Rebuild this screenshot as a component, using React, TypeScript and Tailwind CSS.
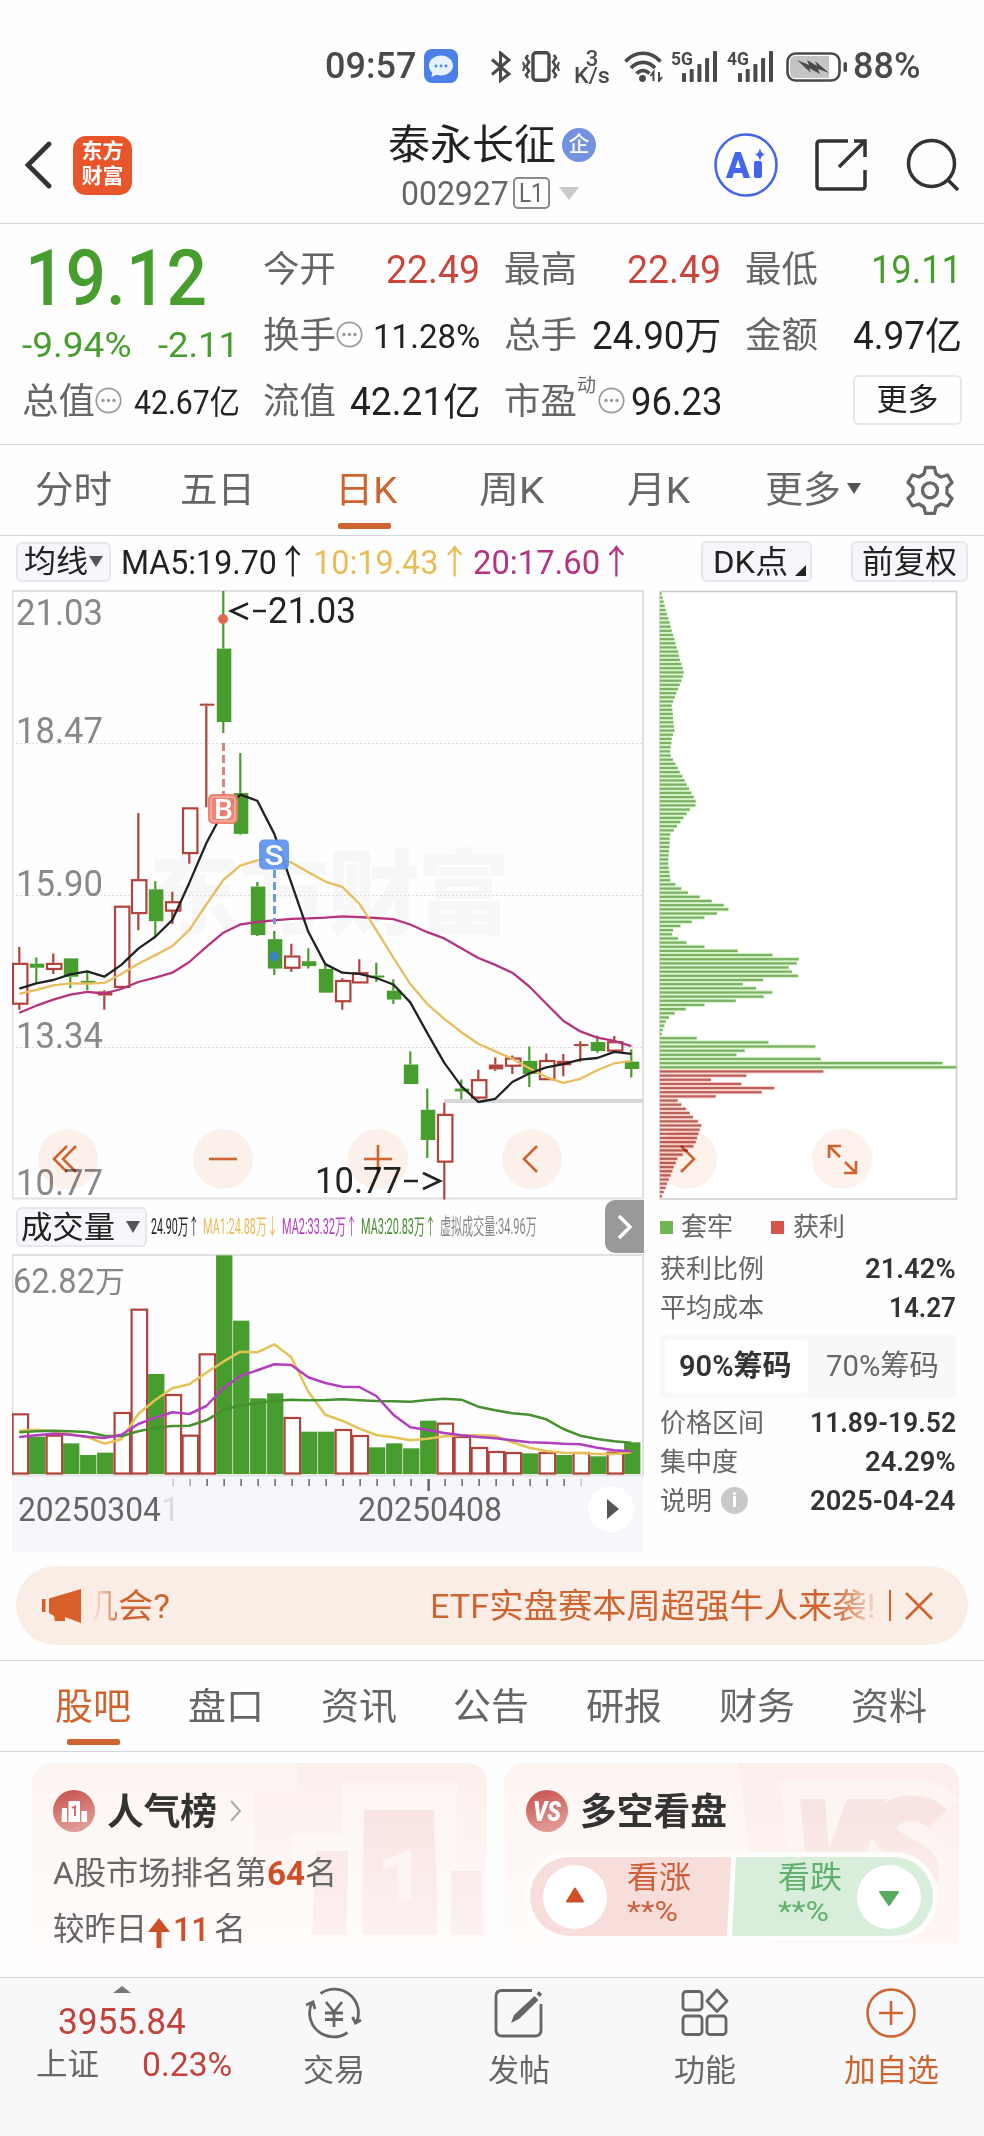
import { useLayoutEffect, useRef, useState, type ReactNode } from "react";

/* Scales one line of text horizontally so that it fills its box. */
function Fit({ className = "", children }: { className?: string; children: ReactNode }) {
  const outer = useRef<HTMLSpanElement>(null);
  const inner = useRef<HTMLSpanElement>(null);
  const [scale, setScale] = useState(1);
  useLayoutEffect(() => {
    if (outer.current && inner.current && inner.current.offsetWidth > 0) {
      setScale(outer.current.clientWidth / inner.current.offsetWidth);
    }
  }, []);
  return (
    <span ref={outer} className={`flex shrink-0 items-center whitespace-nowrap leading-none ${className}`}>
      <span ref={inner} className="inline-block shrink-0 origin-left" style={{ transform: `scaleX(${scale})` }}>
        {children}
      </span>
    </span>
  );
}

const GREEN = "#479d2d";
const RED = "#b1423c";

function Dots() {
  return (
    <svg className="shrink-0" width="27" height="27" viewBox="0 0 27 27">
      <circle cx="13.5" cy="13.5" r="12.2" fill="none" stroke="#999" strokeWidth="1.7" />
      <circle cx="8" cy="13.5" r="1.7" fill="#999" />
      <circle cx="13.5" cy="13.5" r="1.7" fill="#999" />
      <circle cx="19" cy="13.5" r="1.7" fill="#999" />
    </svg>
  );
}

function Signal() {
  return (
    <svg width="36" height="31" viewBox="0 0 36 31" fill="#4a4a4a">
      <rect x="0" y="22" width="4" height="9" rx="1" />
      <rect x="7.7" y="18" width="4" height="13" rx="1" />
      <rect x="15.4" y="13" width="4" height="18" rx="1" />
      <rect x="23.1" y="7" width="4" height="24" rx="1" />
      <rect x="31" y="0" width="4" height="31" rx="1" />
    </svg>
  );
}

function StatusBar() {
  return (
    <div className="flex h-[103px] items-start pl-[325px] pt-[48px] text-[#4a4a4a]">
      <Fit className="h-[36px] w-[91px] text-[36px] font-medium">09:57</Fit>
      <svg className="ml-[8px] mt-px" width="34" height="34" viewBox="0 0 34 34">
        <rect width="34" height="34" rx="8" fill="#4a80e8" />
        <path d="M17 6.5c6.6 0 12 4.400 12 10s-5.400 10-12 10c-1.600 0-3-.2-4.400-.7L7.500 28l.8-4.300C6.300 21.900 5 19.400 5 16.500c0-5.600 5.400-10 12-10z" fill="#e8f2ff" />
        <g fill="#4a80e8"><circle cx="12" cy="17" r="1.400" /><circle cx="17" cy="17" r="1.400" /><circle cx="22" cy="17" r="1.400" /></g>
      </svg>
      <svg className="ml-[32px] mt-[3px]" width="22" height="32" viewBox="0 0 22 32" fill="none" stroke="#4a4a4a" strokeWidth="3">
        <path d="M2 8.500 19 23l-8.500 6.500V2L19 9 2 23.500" />
      </svg>
      <svg className="ml-[10px] mt-[3px]" width="38" height="31" viewBox="0 0 38 31" fill="none" stroke="#4a4a4a">
        <rect x="11" y="1.800" width="16" height="27.400" rx="3" strokeWidth="3.400" />
        <path d="M6 4 4 7l3 4-3 4.500L7 20l-3 4 2 3M32 4l2 3-3 4 3 4.500L31 20l3 4-2 3" strokeWidth="2.600" />
        <path d="M1 11l1.500 4.500L1 20M37 11l-1.500 4.500L37 20" strokeWidth="2" />
      </svg>
      <div className="ml-[14px] mt-[2px] flex w-[36px] flex-col items-center font-medium">
        <span className="text-[22px] leading-[17px]">3</span>
        <Fit className="h-[17px] w-[36px] text-[22px]">K/s</Fit>
      </div>
      <svg className="ml-[14px] mt-[3px]" width="40" height="31" viewBox="0 0 40 31" fill="none" stroke="#4a4a4a" strokeWidth="3.700">
        <path d="M1.500 10.500c9.600-11 25.400-11 35 0M7 17c6.800-7.600 17.200-7.600 24 0M12.500 22.500c4-4 9-4 13 0" />
        <circle cx="18.500" cy="27.500" r="3.400" fill="#4a4a4a" stroke="none" />
        <path d="M29.500 30v-9l-3 4M35 21v9l3-4" strokeWidth="2" />
      </svg>
      <div className="ml-[7px] mt-[3px] flex w-[47px] items-start">
        <Fit className="h-[14px] w-[22px] text-[19px] font-bold">5G</Fit>
        <div className="-ml-[11px]"><Signal /></div>
      </div>
      <div className="ml-[9px] mt-[3px] flex w-[47px] items-start">
        <Fit className="h-[14px] w-[22px] text-[19px] font-bold">4G</Fit>
        <div className="-ml-[11px]"><Signal /></div>
      </div>
      <svg className="ml-[12px] mt-[4px]" width="62" height="30" viewBox="0 0 62 30">
        <rect x="1.500" y="1.500" width="52" height="27" rx="8" fill="#fff" stroke="#4a4a4a" strokeWidth="2.600" />
        <path d="M9 4h34v22H9a5 5 0 0 1-5-5V9a5 5 0 0 1 5-5z" fill="#c4c4c4" />
        <path d="m11 8 12 5-2-5 10 6-2-5 14 12-11-4 2 5-11-6 2 5z" fill="#4a4a4a" />
        <rect x="57.500" y="10" width="3.500" height="10" rx="1.700" fill="#4a4a4a" />
      </svg>
      <Fit className="ml-[5px] h-[36px] w-[67px] text-[36px] font-medium">88%</Fit>
    </div>
  );
}

function Header() {
  return (
    <div className="flex h-[121px] items-center border-b border-[#d4d4d6] pl-[24px] pt-[4px]">
      <svg width="28" height="48" viewBox="0 0 28 48" fill="none" stroke="#333" strokeWidth="4.800" strokeLinecap="round">
        <path d="M25 3 4 24l21 21" />
      </svg>
      <div className="ml-[21px] flex h-[59px] w-[59px] flex-col items-center justify-center rounded-[13px] bg-[#e8552b] pb-[2px] text-[21px] font-bold leading-[25px] text-white">
        <span>东方</span>
        <span>财富</span>
      </div>
      <div className="ml-[256px] flex w-[220px] flex-col pt-[3px]">
        <div className="flex items-center">
          <Fit className="h-[46px] w-[168px] text-[41px] text-[#222]">泰永长征</Fit>
          <span className="ml-[6px] flex h-[34px] w-[34px] items-center justify-center rounded-full bg-[#7393e0] pb-px text-[21px] font-medium leading-none text-white">企</span>
        </div>
        <div className="mt-[7px] flex items-center pl-[13px] text-[#666]">
          <Fit className="h-[36px] w-[108px] text-[34px]">002927</Fit>
          <span className="ml-[4px] flex h-[32px] w-[37px] items-center justify-center rounded-[5px] border-2 border-[#8a8a8a]">
            <Fit className="w-[25px] text-[26px]">L1</Fit>
          </span>
          <span className="ml-[9px] h-0 w-0 border-x-[10px] border-t-[13px] border-x-transparent border-t-[#c9c9c9]" />
        </div>
      </div>
      <svg className="ml-[106px]" width="64" height="64" viewBox="0 0 64 64">
        <circle cx="32" cy="32" r="30.500" fill="none" stroke="#4466ea" strokeWidth="2.600" />
        <text x="12" y="45" textLength="24" lengthAdjust="spacingAndGlyphs" fontSize="37" fontWeight="900" fill="#4466ea" fontFamily="Roboto">A</text>
        <rect x="40" y="28" width="8" height="17" rx="2" fill="#4466ea" />
        <path d="M46 15q1 5.500 5 6.500-4 1-5 6.500-1-5.500-5-6.500 4-1 5-6.500z" fill="#4466ea" />
      </svg>
      <svg className="ml-[37px]" width="52" height="52" viewBox="0 0 52 52" fill="none" stroke="#333" strokeWidth="3.500">
        <path d="M33 2H5q-3 0-3 3v42q0 3 3 3h42q3 0 3-3V31M39 2h11v16M50 2 24 28" />
      </svg>
      <svg className="ml-[39px]" width="54" height="54" viewBox="0 0 54 54" fill="none" stroke="#333" strokeWidth="3.500">
        <circle cx="25.500" cy="25.500" r="23" />
        <path d="m41 41 11 11" />
      </svg>
    </div>
  );
}

function Quote() {
  const label = "h-[44px] w-[73px] text-[36px] text-[#666]";
  return (
    <div className="grid h-[221px] grid-cols-[217px_217px_217px_217px] grid-rows-[66px_66px_66px] gap-x-[24px] border-b border-[#d4d4d6] pl-[22px] pt-[13px]">
      <div className="row-span-2 text-[#479d2d]">
        <Fit className="ml-[3px] mt-[3px] h-[78px] w-[182px] text-[78px] font-medium">19.12</Fit>
        <div className="mt-[9px] flex justify-between">
          <Fit className="h-[36px] w-[110px] text-[35px]">-9.94%</Fit>
          <Fit className="h-[36px] w-[81px] text-[35px]">-2.11</Fit>
        </div>
      </div>
      <div className="flex items-center justify-between">
        <Fit className={label}>今开</Fit><Fit className="w-[94px] text-[39px] text-[#c9463d]">22.49</Fit>
      </div>
      <div className="flex items-center justify-between">
        <Fit className={label}>最高</Fit><Fit className="w-[94px] text-[39px] text-[#c9463d]">22.49</Fit>
      </div>
      <div className="flex items-center justify-between">
        <Fit className={label}>最低</Fit><Fit className="w-[91px] text-[39px] text-[#479d2d]">19.11</Fit>
      </div>
      <div className="flex items-center">
        <Fit className={label}>换手</Fit><span className="mb-[4px]"><Dots /></span><Fit className="ml-[10px] w-[107px] text-[34px] text-[#222]">11.28%</Fit>
      </div>
      <div className="flex items-center justify-between">
        <Fit className={label}>总手</Fit><Fit className="w-[129px] text-[38px] text-[#222]">24.90万</Fit>
      </div>
      <div className="flex items-center justify-between">
        <Fit className={label}>金额</Fit><Fit className="w-[109px] text-[38px] text-[#222]">4.97亿</Fit>
      </div>
      <div className="flex items-center">
        <Fit className={label}>总值</Fit><span className="mb-[4px]"><Dots /></span><Fit className="ml-[12px] w-[106px] text-[33px] text-[#222]">42.67亿</Fit>
      </div>
      <div className="flex items-center justify-between">
        <Fit className={label}>流值</Fit><Fit className="w-[130px] text-[38px] text-[#222]">42.21亿</Fit>
      </div>
      <div className="flex items-center">
        <Fit className={label}>市盈</Fit>
        <span className="mb-[34px] text-[19px] leading-none text-[#666]">动</span>
        <span className="mb-[4px] ml-[2px]"><Dots /></span>
        <Fit className="ml-[6px] w-[91px] text-[38px] text-[#222]">96.23</Fit>
      </div>
      <div className="flex items-center justify-end">
        <div className="mb-[4px] flex h-[50px] w-[109px] items-center justify-center rounded-[6px] border-2 border-[#e8e8ea] pb-[2px] text-[31px] leading-none text-[#222]">更多</div>
      </div>
    </div>
  );
}

function Periods() {
  return (
    <div className="flex h-[91px] items-center border-b border-[#d4d4d6] pl-[35px] text-[37px] text-[#666]">
      <Fit className="h-[44px] w-[77px]">分时</Fit>
      <Fit className="ml-[68px] h-[44px] w-[75px]">五日</Fit>
      <div className="relative ml-[80px] text-[#cf6430]">
        <Fit className="h-[44px] w-[62px]">日K</Fit>
        <span className="absolute -bottom-[17px] left-[3px] h-[6px] w-[53px] rounded-[2px] bg-[#cf6430]" />
      </div>
      <Fit className="ml-[82px] h-[44px] w-[65px]">周K</Fit>
      <Fit className="ml-[83px] h-[44px] w-[63px]">月K</Fit>
      <Fit className="ml-[75px] h-[44px] w-[76px]">更多</Fit>
      <span className="mb-[3px] ml-[6px] h-0 w-0 border-x-[7px] border-t-[11px] border-x-transparent border-t-[#555]" />
      <svg className="mb-px ml-[44px]" width="50" height="50" viewBox="0 0 50 50" fill="none" stroke="#666" strokeWidth="3.300" strokeLinejoin="round">
        <path d="M20.500 2.500h9l1.500 6.500 5 3 6.500-2 4.500 7.500-5 5v6l5 5-4.500 7.500-6.500-2-5 3-1.500 6.500h-9L19 42l-5-3-6.500 2L3 33.500l5-5v-6l-5-5L7.500 10l6.500 2 5-3z" />
        <circle cx="25" cy="25.300" r="7.500" />
      </svg>
    </div>
  );
}

const chip = "flex items-center rounded-[6px] border-2 border-[#e5e7ec] bg-[#f6f7fa] text-[#222]";

function AverageRow() {
  return (
    <div className="flex h-[52px] items-center pb-px pl-[16px]">
      <div className={`${chip} h-[40px] w-[95px] pl-[6px]`}>
        <Fit className="w-[64px] text-[31px]">均线</Fit>
        <span className="ml-[1px] h-0 w-0 border-x-[7px] border-t-[11px] border-x-transparent border-t-[#555]" />
      </div>
      <Fit className="ml-[10px] h-[36px] w-[188px] text-[34px] text-[#222]">MA5:19.70↑</Fit>
      <Fit className="ml-[4px] h-[36px] w-[158px] text-[34px] text-[#e8bd58]">10:19.43↑</Fit>
      <Fit className="ml-[2px] h-[36px] w-[160px] text-[34px] text-[#b5347d]">20:17.60↑</Fit>
      <div className={`${chip} ml-[68px] h-[41px] w-[111px] pl-[10px]`}>
        <Fit className="w-[75px] text-[32px]">DK点</Fit>
        <span className="ml-[7px] mt-[18px] h-0 w-0 border-b-[11px] border-l-[11px] border-b-[#222] border-l-transparent" />
      </div>
      <div className={`${chip} ml-[39px] h-[41px] w-[117px] justify-center`}>
        <Fit className="w-[95px] text-[32px]">前复权</Fit>
      </div>
    </div>
  );
}

/* high, body top, body bottom, low; 1 = rising */
const CANDLES = [
  [899, 938, 1038, 1053, 1], [925, 940, 950, 988, 0], [915, 938, 953, 965, 1], [927, 927, 972, 1000, 0], [960, 982, 987, 1005, 0],
  [1005, 1008, 1018, 1053, 1], [798, 798, 997, 1000, 1], [571, 733, 816, 858, 1], [738, 758, 836, 873, 0], [764, 787, 810, 843, 1],
  [557, 557, 669, 695, 1], [305, 303, 308, 557, 1], [27, 168, 348, 375, 0], [424, 522, 622, 624, 0], [740, 751, 870, 872, 0],
  [860, 880, 952, 968, 0], [891, 920, 950, 960, 1], [902, 934, 946, 952, 0], [940, 953, 1011, 1012, 0], [976, 980, 1032, 1053, 1],
  [929, 961, 986, 987, 1], [938, 969, 974, 985, 0], [978, 1006, 1028, 1039, 0], [1155, 1187, 1235, 1235, 0], [1246, 1298, 1372, 1416, 0],
  [1281, 1308, 1425, 1518, 1], [1224, 1246, 1253, 1272, 0], [1200, 1223, 1268, 1272, 1], [1170, 1187, 1199, 1203, 1], [1165, 1170, 1190, 1210, 1],
  [1143, 1178, 1210, 1242, 0], [1160, 1176, 1223, 1225, 1], [1161, 1178, 1189, 1216, 1], [1130, 1137, 1141, 1180, 1], [1116, 1132, 1154, 1158, 0],
  [1117, 1130, 1153, 1155, 1], [1150, 1180, 1198, 1219, 0],
];
const MA5 = [1001, 988, 980, 966, 959, 972, 943, 903, 874, 833, 742, 645, 567, 526, 541, 622, 742, 862, 941, 962, 965, 975, 991, 1035, 1110, 1183, 1240, 1279, 1271, 1230, 1209, 1194, 1186, 1175, 1171, 1156, 1161];
const MA10 = [1014, 1004, 993, 988, 989, 987, 965, 940, 919, 897, 858, 795, 735, 700, 687, 682, 692, 716, 739, 752, 793, 858, 925, 990, 1039, 1075, 1108, 1136, 1155, 1173, 1196, 1218, 1232, 1222, 1201, 1184, 1178];
const MA20 = [1060, 1043, 1028, 1016, 1009, 1013, 1002, 985, 974, 962, 936, 899, 864, 844, 838, 834, 830, 829, 827, 824, 826, 828, 831, 844, 863, 878, 902, 926, 943, 962, 996, 1038, 1080, 1106, 1121, 1129, 1142];

const cx = (i: number) => 7.3 + 17 * i;
const py = (v: number) => v / 2.45 - 8;
const vy = (v: number) => v / 3 - 64;
const points = (data: number[], f: (v: number) => number) => data.map((v, i) => `${cx(i)},${f(v).toFixed(1)}`).join(" ");

function PriceChart() {
  const axis = { fontSize: 36, fill: "#888", textLength: 87, lengthAdjust: "spacingAndGlyphs" as const };
  return (
    <svg className="block" width="632" height="612" viewBox="0 0 632 612" fontFamily="Roboto">
      <text x="136" y="339" fontSize="92" fontWeight="900" fill="#f7f7f7" textLength="362" fontFamily="Noto Sans CJK SC">东方财富</text>
      <g stroke="#dcdcdc" strokeWidth="1.200" strokeDasharray="2 2">
        <path d="M0 155.500h631M0 307.500h631M0 459.500h631" />
      </g>
      <rect x="0.500" y="3" width="630.500" height="607.500" fill="none" stroke="#e0e0e0" strokeWidth="2" />
      <rect x="432" y="511" width="199" height="4" fill="#d6d5da" />
      {CANDLES.map(([h, t, b, l, up], i) => {
        const x = cx(i);
        const color = up ? RED : GREEN;
        const thin = b - t < 13;
        return (
          <g key={i}>
            <path d={`M${x} ${py(h)}V${py(t)}M${x} ${py(b)}V${py(l)}`} stroke={color} strokeWidth="2.200" />
            {up && !thin ? (
              <rect x={x - 6.3} y={py(t) + 1} width="14.400" height={py(b) - py(t) - 1} fill="#fff" stroke={color} strokeWidth="2.200" />
            ) : (
              <rect x={x - 6.5} y={py(t)} width="14.500" height={Math.max(py(b) - py(t), 2)} fill={color} />
            )}
          </g>
        );
      })}
      <circle cx="211" cy="31" r="5" fill="#e0694f" />
      <circle cx="262" cy="368.500" r="5" fill="#3d82b8" />
      <g fill="none" strokeWidth="2.300" strokeLinejoin="round">
        <polyline points={points(MA20, py)} stroke="#b5347d" />
        <polyline points={points(MA10, py)} stroke="#e8bd60" />
        <polyline points={points(MA5, py)} stroke="#222" />
      </g>
      <path d="M211.500 155v52" stroke="#d4887d" strokeWidth="3" strokeDasharray="8 4" />
      <path d="M262.500 282v54" stroke="#6b9be6" strokeWidth="3" strokeDasharray="8 4" />
      <rect x="196" y="206" width="30" height="30" rx="5" fill="#ec7d6c" fillOpacity=".93" />
      <rect x="199" y="209" width="24" height="24" rx="3" fill="none" stroke="#f4b2a8" strokeWidth="1.500" />
      <text x="202" y="231" textLength="19" lengthAdjust="spacingAndGlyphs" fontSize="28" fontWeight="500" fill="#fff">B</text>
      <rect x="247" y="251.500" width="30" height="30" rx="5" fill="#6096ee" fillOpacity=".95" />
      <text x="252.500" y="276.500" textLength="19" lengthAdjust="spacingAndGlyphs" fontSize="28" fontWeight="500" fill="#fff">S</text>
      <text x="4" y="36.500" {...axis}>21.03</text>
      <text x="4" y="155" {...axis}>18.47</text>
      <text x="4" y="307.500" {...axis}>15.90</text>
      <text x="4" y="459.500" {...axis}>13.34</text>
      <text x="4" y="607" {...axis}>10.77</text>
      <g fontSize="36" fill="#222">
        <text x="256" y="34.500" textLength="88" lengthAdjust="spacingAndGlyphs">21.03</text>
        <text x="303" y="604.500" textLength="87" lengthAdjust="spacingAndGlyphs">10.77</text>
      </g>
      <g fill="none" stroke="#222" strokeWidth="2.600">
        <path d="M236 15.500 219 23l17 8M241 23h13M392 593h14M411 585l17 8-17 8" />
      </g>
    </svg>
  );
}

const CHIPS = [
  63, 66, 69, 72, 75, 79, 83, 87, 90, 93, 97, 101, 104, 108, 112, 115, 118, 122, 126, 129, 126, 122, 117, 112, 107, 102, 97, 93, 95, 96,
  97, 98, 100, 101, 97, 93, 92, 90, 88, 90, 97, 104, 111, 117, 125, 132, 138, 145, 152, 159, 165, 164, 148, 138, 128, 119, 109, 99, 89, 87,
  87, 86, 85, 84, 83, 82, 84, 86, 87, 89, 104, 122, 142, 177, 213, 249, 263, 229, 191, 153, 119, 97, 94, 112, 137, 191, 291, 395, 474, 468,
  444, 454, 472, 367, 306, 346, 395, 369, 285, 191, 135, 102, 85, 75, 71, 66, 63, 168, 383, 524, 312, 287, 540, 905, 948, 548, 317, 211, 302, 401,
  363, 225, 111, 122, 136, 147, 157, 172, 182, 177, 173, 169, 165, 158, 142, 126, 110, 105, 99, 95, 90, 84, 79, 75, 69, 64,
];

function ChipChart() {
  return (
    <svg className="block" width="299" height="612" viewBox="0 0 299 612">
      <rect x="1" y="3.500" width="296.500" height="607.500" fill="#fff" stroke="#ccc" strokeWidth="1.600" />
      {CHIPS.map((v, i) => (
        <g key={i}>
          <rect x="1" y={3.300 + i * 4.157} width={(v - 59) / 3 + 0.6} height="4.157" fill={i < 115 ? "#d3f4c4" : "#fbd3cd"} />
          <rect x="1" y={4.300 + i * 4.157} width={(v - 59) / 3 + 0.3} height="2.200" fill={i < 115 ? "#7bb065" : "#bb605a"} />
        </g>
      ))}
    </svg>
  );
}

function RoundButton({ className, d }: { className: string; d: string }) {
  return (
    <svg className={`absolute top-[541px] mix-blend-multiply ${className}`} width="60" height="60" viewBox="0 0 60 60">
      <circle cx="30" cy="30" r="30" fill="#fcf2eb" />
      <path d={d} fill="none" stroke="#cf6430" strokeWidth="2.600" />
    </svg>
  );
}

const VOLUME = [
  [670, 1], [740, 0], [734, 1], [760, 0], [795, 0], [788, 0], [666, 1], [356, 1], [552, 0], [612, 1], [734, 1], [490, 1], [196, 0], [392, 0], [625, 0], [610, 0], [681, 1], [725, 0], [725, 0],
  [717, 1], [735, 1], [772, 0], [760, 0], [775, 0], [692, 0], [698, 1], [738, 1], [771, 1], [783, 1], [786, 1], [790, 0], [786, 1], [795, 0], [786, 1], [799, 0], [785, 1], [757, 0],
];
const V1 = [722, 719, 724, 733, 741, 761, 748, 672, 630, 595, 583, 548, 515, 485, 487, 463, 502, 605, 674, 692, 716, 735, 742, 751, 746, 739, 736, 736, 738, 757, 773, 783, 788, 789, 792, 792, 787];
const V2 = [741, 736, 731, 734, 740, 744, 734, 702, 683, 667, 672, 648, 595, 558, 541, 523, 525, 562, 579, 590, 591, 618, 674, 712, 720, 729, 736, 741, 745, 751, 757, 758, 761, 763, 773, 781, 784];
const V3 = [727, 724, 722, 724, 726, 737, 739, 724, 713, 708, 707, 691, 661, 645, 640, 632, 629, 631, 630, 628, 631, 633, 634, 635, 630, 626, 629, 650, 661, 670, 674, 688, 717, 737, 747, 754, 758];

function VolumeChart() {
  return (
    <svg className="block" width="632" height="223" viewBox="0 0 632 223" fontFamily="Roboto">
      <rect x="0.500" y="1" width="630.500" height="220.500" fill="none" stroke="#e0e0e0" strokeWidth="2" />
      {VOLUME.map(([v, up], i) => {
        const y = vy(v);
        const x = cx(i) - 6.7;
        return up ? (
          <rect key={i} x={x} y={y + 1} width="15.500" height={218.500 - y} fill="#fff" stroke={RED} strokeWidth="2.200" />
        ) : (
          <rect key={i} x={x - 0.5} y={y} width="16.300" height={220 - y} fill={GREEN} />
        );
      })}
      <g fill="none" strokeWidth="2.500" strokeLinejoin="round">
        <polyline points={points(V1, vy)} stroke="#e3c356" />
        <polyline points={points(V3, vy)} stroke="#479030" />
        <polyline points={points(V2, vy)} stroke="#b23fbd" />
      </g>
      <text x="1" y="39" fontSize="35" fill="#888" textLength="82" lengthAdjust="spacingAndGlyphs">62.82</text>
      <text x="83" y="38" fontSize="30" fill="#888" fontFamily="Noto Sans CJK SC">万</text>
    </svg>
  );
}

function DateAxis() {
  return (
    <div className="flex h-[75px] w-[631px] flex-col bg-[#f6f7fa]">
      <svg className="block" width="631" height="15" viewBox="0 0 631 15">
        {Array.from({ length: 25 }, (_, i) => (
          <rect key={i} x={160.400 + i * 17} y="2" width={i === 15 ? 2.500 : 1.500} height={i === 15 ? 12 : 7} fill="#666" opacity={i === 0 || i === 24 ? 0.35 : i === 1 ? 0.6 : 1} />
        ))}
      </svg>
      <div className="-mt-[6px] flex items-center pl-[6px] text-[34px] text-[#666]">
        <Fit className="w-[143px]">20250304</Fit>
        <span className="w-[18px] overflow-hidden leading-none text-[#dcdcdf]">1</span>
        <Fit className="ml-[179px] w-[144px]">20250408</Fit>
        <span className="ml-[86px] flex h-[46px] w-[46px] items-center justify-center rounded-full bg-white pl-[3px]">
          <span className="h-0 w-0 border-y-[10px] border-l-[12px] border-y-transparent border-l-[#555]" />
        </span>
      </div>
    </div>
  );
}

function VolumeHeader() {
  return (
    <div className="flex h-[54px] w-[632px] items-center pl-[4px]">
      <div className={`${chip} h-[40px] w-[131px] pl-[3px]`}>
        <Fit className="w-[94px] text-[31px]">成交量</Fit>
        <span className="ml-[11px] h-0 w-0 border-x-[7px] border-t-[12px] border-x-transparent border-t-[#555]" />
      </div>
      <div className="ml-[4px] flex items-center text-[22px]">
        <Fit className="w-[48px] text-[#222]">24.90万↑</Fit>
        <Fit className="ml-[4px] w-[75px] text-[#e8bd58]">MA1:24.88万↓</Fit>
        <Fit className="ml-[4px] w-[75px] text-[#b23fbd]">MA2:33.32万↑</Fit>
        <Fit className="ml-[4px] w-[75px] text-[#479030]">MA3:20.83万↑</Fit>
        <Fit className="ml-[4px] w-[97px] text-[#888]">虚拟成交量:34.96万</Fit>
      </div>
      <span className="ml-auto flex h-[53px] w-[39px] items-center justify-center self-start rounded-l-[10px] bg-[#999]">
        <svg width="16" height="26" viewBox="0 0 16 26" fill="none" stroke="#fff" strokeWidth="3.500"><path d="m2 2 11 11L2 24" /></svg>
      </span>
    </div>
  );
}

function Stat({ label, value, w, lw, info }: { label: string; value: string; w: string; lw: string; info?: boolean }) {
  return (
    <div className="flex h-[39px] items-center">
      <Fit className={`${lw} text-[26px] text-[#666]`}>{label}</Fit>
      {info && <span className="ml-[9px] flex h-[27px] w-[27px] items-center justify-center rounded-full bg-[#c9c9c9] text-[21px] font-bold leading-none text-white">i</span>}
      <Fit className={`${w} ml-auto text-[28px] font-semibold text-[#333]`}>{value}</Fit>
    </div>
  );
}

function ChipPanel() {
  return (
    <div className="ml-[16px] flex w-[296px] flex-col">
      <div className="flex h-[49px] items-center pt-[5px] text-[26px] text-[#666]">
        <span className="h-[13px] w-[13px] bg-[#72b556]" />
        <Fit className="ml-[8px] w-[52px]">套牢</Fit>
        <span className="ml-[38px] h-[13px] w-[13px] bg-[#d6544e]" />
        <Fit className="ml-[9px] w-[52px]">获利</Fit>
      </div>
      <Stat label="获利比例" lw="w-[104px]" value="21.42%" w="w-[91px]" />
      <Stat label="平均成本" lw="w-[104px]" value="14.27" w="w-[67px]" />
      <div className="mb-[5px] mt-[8px] flex h-[63px] items-center rounded-[4px] bg-[#f7f8fa] pl-[5px] text-[#666]">
        <div className="flex h-[53px] w-[143px] items-center justify-center rounded-[4px] bg-white pr-[2px] font-semibold text-[#333]">
          <Fit className="w-[113px] text-[29px]">90%筹码</Fit>
        </div>
        <Fit className="ml-[18px] w-[113px] text-[29px]">70%筹码</Fit>
      </div>
      <Stat label="价格区间" lw="w-[104px]" value="11.89-19.52" w="w-[146px]" />
      <Stat label="集中度" lw="w-[78px]" value="24.29%" w="w-[91px]" />
      <Stat label="说明" lw="w-[52px]" value="2025-04-24" w="w-[146px]" info />
    </div>
  );
}

function Charts() {
  return (
    <div className="relative h-[967px] pl-[12px]">
      <div className="flex">
        <PriceChart />
        <div className="ml-[15px]"><ChipChart /></div>
      </div>
      <div className="flex">
        <div className="w-[632px]">
          <VolumeHeader />
          <VolumeChart />
          <DateAxis />
        </div>
        <ChipPanel />
      </div>
      <RoundButton className="left-[38px]" d="M29 17 16 30l13 13M38 17 25 30l13 13" />
      <RoundButton className="left-[193px]" d="M16 30h28" />
      <RoundButton className="left-[348px]" d="M16 30h28M30 16v28" />
      <RoundButton className="left-[502px]" d="M35 17 22 30l13 13" />
      <RoundButton className="left-[657px]" d="M24 17l13 13-13 13" />
      <RoundButton className="left-[812px]" d="M17 29V17h12M17 17l11 11M32 44h12V32M44 44 33 33" />
    </div>
  );
}

function Banner() {
  return (
    <div className="flex h-[106px] border-b border-[#d4d4d6] pl-[16px] pt-[11px]">
      <div className="flex h-[79px] w-[952px] items-center rounded-full bg-[#faede5] pl-[25px] text-[34px] text-[#cf6430]">
        <svg width="41" height="34" viewBox="0 0 41 34" fill="#d86028">
          <rect x="1" y="10" width="3.500" height="13" />
          <path d="M8 9.500 40 0v34L24 28v4H14l-1-5-5-3z" />
        </svg>
        <div className="ml-[9px] flex h-[50px] w-[342px] items-center overflow-hidden leading-none [mask-image:linear-gradient(90deg,transparent,black_32px)]">
          <Fit className="w-[27px]">几</Fit><Fit className="w-[52px]">会?</Fit>
        </div>
        <div className="flex h-[50px] w-[450px] items-center overflow-hidden [mask-image:linear-gradient(90deg,black_400px,transparent_450px)]">
          <Fit className="-ml-[3px] w-[446px]">ETF实盘赛本周超强牛人来袭!</Fit>
        </div>
        <span className="ml-[6px] h-[31px] w-[1.500px] bg-[#cf6430]" />
        <svg className="ml-[13px]" width="30" height="30" viewBox="0 0 30 30" fill="none" stroke="#cf6430" strokeWidth="2.700"><path d="m2 2 26 26M28 2 2 28" /></svg>
      </div>
    </div>
  );
}

function SectionTabs() {
  return (
    <div className="flex h-[91px] items-center border-b border-[#d4d4d6] pl-[27px] pt-[2px] text-[37px] text-[#666]">
      {["股吧", "盘口", "资讯", "公告", "研报", "财务", "资料"].map((t, i) => (
        <div key={t} className={`relative flex w-[132.700px] justify-center ${i === 0 ? "text-[#cf6430]" : ""}`}>
          <Fit className="h-[44px] w-[76px]">{t}</Fit>
          {i === 0 && <span className="absolute -bottom-[16px] left-[40px] h-[6px] w-[53px] rounded-[2px] bg-[#cf6430]" />}
        </div>
      ))}
    </div>
  );
}

function Cards() {
  const card = "relative h-[210px] w-[455px] overflow-hidden rounded-[20px] bg-gradient-to-b from-[#fdf5f2] to-[#fffdfc]";
  return (
    <div className="flex h-[225px] gap-[17px] pl-[32px] pt-[11px]">
      <div className={`${card} pl-[21px] pt-[25px]`}>
        <svg className="absolute right-0 top-0" width="235" height="210" viewBox="0 0 235 210">
          <defs>
            <linearGradient id="haze" x1="0" y1="0" x2="0" y2="1"><stop offset="0" stopColor="#fbecea" /><stop offset="1" stopColor="#fdf5f3" /></linearGradient>
            <linearGradient id="bars" gradientUnits="userSpaceOnUse" x1="0" y1="40" x2="0" y2="175"><stop offset="0" stopColor="#f8e4e2" /><stop offset="1" stopColor="#fcf2f0" /></linearGradient>
          </defs>
          <path d="M45 0h190v108h-30V20H90v52H40v38H2V28h43z" fill="url(#haze)" opacity=".7" />
          <path d="M112 47h70l4 125h-76zM64 88h32l-1 84H60zM199 108h30l2 64h-32z" fill="url(#bars)" />
          <path d="m131 97 28-10v50h-13v-36l-15 5z" fill="#fdf5f3" />
        </svg>
        <div className="relative flex items-center">
          <svg width="42" height="42" viewBox="0 0 42 42">
            <defs><linearGradient id="badge" x1="0" y1="0" x2="0.300" y2="1"><stop offset="0" stopColor="#c64f4b" /><stop offset="1" stopColor="#e09a94" /></linearGradient></defs>
            <circle cx="21" cy="21" r="21" fill="url(#badge)" />
            <path d="M9 18h5v14H8.500zM15.500 11h11.500v21H15.500zM28.500 21h5.500v11h-5.500z" fill="#fff" />
            <path d="m19 18 3-1.500V26" fill="none" stroke="#cc6661" strokeWidth="1.800" />
          </svg>
          <Fit className="ml-[12px] mt-[2px] h-[44px] w-[110px] text-[37px] font-bold text-[#333]">人气榜</Fit>
          <svg className="ml-[12px]" width="14" height="22" viewBox="0 0 14 22" fill="none" stroke="#aaa" strokeWidth="2"><path d="m2 1 9 10-9 10" /></svg>
        </div>
        <div className="relative mt-[21px] flex h-[36px] items-center text-[32px] leading-none text-[#666]">
          <Fit className="w-[214px]">A股市场排名第</Fit>
          <Fit className="w-[38px] text-[34px] font-bold text-[#cf5028]">64</Fit>
          <span>名</span>
        </div>
        <div className="relative mt-[20px] flex h-[36px] items-center text-[32px] leading-none text-[#666]">
          <Fit className="w-[94px]">较昨日</Fit>
          <svg className="mt-[8px]" width="24" height="30" viewBox="0 0 24 30" fill="#cf5028"><path d="m12 0 11 14H14.500v16h-5V14H1z" /></svg>
          <Fit className="ml-[2px] w-[37px] text-[34px] font-medium text-[#cf5028]">11</Fit>
          <span className="ml-[4px]">名</span>
        </div>
      </div>
      <div className={`${card} pl-[22px] pt-[25px]`}>
        <svg className="absolute right-0 top-0" width="235" height="210" viewBox="0 0 235 210">
          <path d="M14 0h221v180H45L26 92z" fill="url(#haze)" opacity=".8" />
          <g stroke="#fdf5f2" fill="none">
            <path d="M76 36h25l4 56 19-56h39l-31 84H84z" strokeWidth="36" />
            <path d="M214 56C194 36 158 46 160 68c2 18 46 20 42 44-4 22-42 24-62 8" strokeWidth="58" />
          </g>
          <path d="M76 36h25l4 50 18-50h39l-31 84H84z" fill="url(#bars)" />
          <path d="M214 56C194 36 158 46 160 68c2 18 46 20 42 44-4 22-42 24-62 8" fill="none" stroke="url(#bars)" strokeWidth="26" />
        </svg>
        <div className="relative flex items-center">
          <svg width="42" height="42" viewBox="0 0 42 42">
            <circle cx="21" cy="21" r="21" fill="url(#badge)" />
            <text x="7" y="31" fontSize="27" fontWeight="900" fontStyle="italic" fill="#fff" fontFamily="Roboto" textLength="28" lengthAdjust="spacingAndGlyphs">VS</text>
          </svg>
          <Fit className="ml-[12px] mt-[2px] h-[44px] w-[147px] text-[37px] font-bold text-[#333]">多空看盘</Fit>
        </div>
        <div className="relative -ml-[1px] mt-[18px] flex h-[89px] w-[413px] items-center rounded-full bg-white/80 pl-[5px]">
          <svg className="absolute left-[5px] top-[5px]" width="403" height="79" viewBox="0 0 403 79">
            <path d="M39.500 0H201l-4 79H39.500a39.500 39.500 0 0 1 0-79z" fill="#f8deda" />
            <path d="M206 0h157.500a39.500 39.500 0 0 1 0 79H202z" fill="#d9eddb" />
          </svg>
          <span className="relative ml-[13px] flex h-[64px] w-[64px] items-center justify-center rounded-full bg-white">
            <svg className="-mt-[3px]" width="20" height="16" viewBox="0 0 20 16"><path d="M10 1.500 18 14.500H2z" fill="#cf5028" stroke="#cf5028" strokeWidth="2" strokeLinejoin="round" /></svg>
          </span>
          <div className="relative -mt-[6px] ml-[20px] flex flex-col text-[#cf5f38]">
            <Fit className="h-[38px] w-[64px] text-[31px]">看涨</Fit>
            <Fit className="h-[32px] w-[51px] text-[27px]">**%</Fit>
          </div>
          <div className="relative -mt-[6px] ml-[87px] flex flex-col text-[#5fb06c]">
            <Fit className="h-[38px] w-[64px] text-[31px]">看跌</Fit>
            <Fit className="h-[32px] w-[51px] text-[27px]">**%</Fit>
          </div>
          <span className="relative ml-[15px] flex h-[64px] w-[64px] items-center justify-center rounded-full bg-white">
            <svg className="mt-[3px]" width="22" height="17" viewBox="0 0 22 17"><path d="M11 15 20 2H2z" fill="#57ab5d" stroke="#57ab5d" strokeWidth="2" strokeLinejoin="round" /></svg>
          </span>
        </div>
      </div>
    </div>
  );
}

function BottomBar() {
  const item = "flex flex-col items-center";
  return (
    <div className="flex h-[159px] border-t border-[#d4d4d6] bg-[#f7f8fa] text-[31px] text-[#666]">
      <div className="flex w-[243px] flex-col items-center pt-[8px]">
        <span className="h-0 w-0 border-x-[9px] border-b-[7px] border-x-transparent border-b-[#777]" />
        <Fit className="mt-[10px] h-[38px] w-[128px] text-[36px] text-[#c4423c]">3955.84</Fit>
        <div className="ml-[24px] mt-[3px] flex w-[196px] items-center justify-between">
          <Fit className="h-[40px] w-[63px]">上证</Fit>
          <Fit className="w-[90px] text-[34px] text-[#c4423c]">0.23%</Fit>
        </div>
      </div>
      <div className={`${item} ml-[61px] w-[60px] pt-[9px]`}>
        <svg className="-mx-1" width="58" height="52" viewBox="0 0 58 52" fill="none" stroke="#666" strokeWidth="2.800">
          <path d="M15.500 6.500a24 24 0 0 1 36 29M42.500 45.500A24 24 0 0 1 7 15.500M1 18l7-3 2 7M56 33l-5.500 3-3-6" />
          <path d="m21 15 8 10 8-10M29 25v15M20 26h18M20 32.500h18" />
        </svg>
        <Fit className="mt-[9px] h-[44px] w-[62px]">交易</Fit>
      </div>
      <div className={`${item} ml-[125px] w-[60px] pt-[9px]`}>
        <svg width="52" height="52" viewBox="0 0 52 52" fill="none" stroke="#666" strokeWidth="2.800">
          <path d="M39 3.500H9q-6 0-6 6V43q0 6 6 6h33q6 0 6-6V17" />
          <path d="m18 36 3-8L41.500 9l4 4L26 32zM43.500 7l2.500-3 3 3-2 3z" fill="#666" stroke="none" />
        </svg>
        <Fit className="mt-[9px] h-[44px] w-[62px]">发帖</Fit>
      </div>
      <div className={`${item} ml-[126px] w-[60px] pt-[9px]`}>
        <svg width="50" height="52" viewBox="0 0 50 52" fill="none" stroke="#666" strokeWidth="2.800" strokeLinejoin="round">
          <rect x="3" y="4.500" width="19" height="18.500" rx="3" />
          <rect x="3" y="29" width="19" height="18.500" rx="3" />
          <rect x="27" y="29" width="19" height="18.500" rx="3" />
          <path d="M37 3 47 14 37 24.500 27 14z" />
        </svg>
        <Fit className="mt-[9px] h-[44px] w-[62px]">功能</Fit>
      </div>
      <div className={`${item} ml-[109px] w-[94px] pt-[9px] text-[#cf6430]`}>
        <svg width="52" height="52" viewBox="0 0 52 52" fill="none" stroke="#cf6430" strokeWidth="2.600">
          <circle cx="26" cy="26" r="23.500" />
          <path d="M14 26h24M26 14v24" />
        </svg>
        <Fit className="mt-[9px] h-[44px] w-[95px]">加自选</Fit>
      </div>
    </div>
  );
}

export default function App() {
  return (
    <div className="flex h-[2136px] w-[984px] flex-col overflow-hidden bg-[#fefefe] font-['Roboto','Noto_Sans_CJK_SC',sans-serif]">
      <StatusBar />
      <Header />
      <Quote />
      <Periods />
      <AverageRow />
      <Charts />
      <Banner />
      <SectionTabs />
      <Cards />
      <BottomBar />
    </div>
  );
}
